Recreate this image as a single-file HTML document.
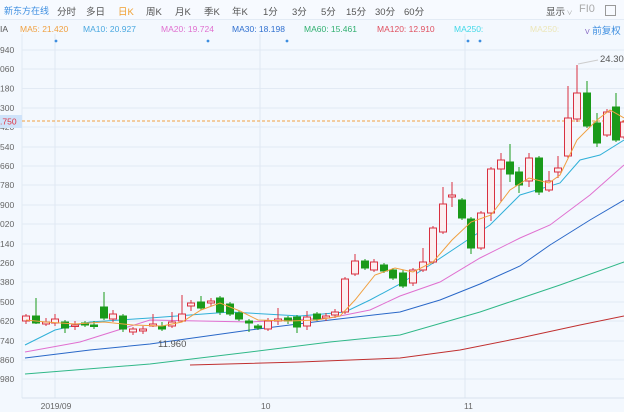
<!DOCTYPE html>
<html><head><meta charset="utf-8"><style>
body{margin:0;width:624px;height:412px;overflow:hidden;background:#f3f8fe;font-family:"Liberation Sans","Noto Sans CJK SC",sans-serif}
.t{position:absolute;font-size:9.5px;white-space:nowrap;color:#555}
.m{position:absolute;font-size:8.5px;white-space:nowrap;top:24px}
</style></head><body>
<div style="position:absolute;left:0;top:0;width:624px;height:19px;background:#f7faff;border-bottom:1px solid #e3ebf5"></div>
<div class="t" style="left:4px;top:4px;color:#3d8ee0;font-size:9px">新东方在线</div>
<div class="t" style="left:57px;top:4px">分时</div>
<div class="t" style="left:86px;top:4px">多日</div>
<div class="t" style="left:118px;top:4px;color:#f0a030">日K</div>
<div class="t" style="left:146px;top:4px">周K</div>
<div class="t" style="left:175px;top:4px">月K</div>
<div class="t" style="left:204px;top:4px">季K</div>
<div class="t" style="left:232px;top:4px">年K</div>
<div class="t" style="left:263px;top:4px">1分</div>
<div class="t" style="left:292px;top:4px">3分</div>
<div class="t" style="left:321px;top:4px">5分</div>
<div class="t" style="left:346px;top:4px">15分</div>
<div class="t" style="left:375px;top:4px">30分</div>
<div class="t" style="left:404px;top:4px">60分</div>
<div class="t" style="left:546px;top:4px">显示<span style="font-size:6px;color:#999"> ∨</span></div>
<div class="t" style="left:579px;top:3px;color:#aaa;font-size:11px">FI0</div>
<div style="position:absolute;left:605px;top:5px;width:9px;height:9px;border:1px solid #999"></div>
<div class="m" style="left:0;color:#555">IA</div>
<div class="m" style="left:20px;color:#f0a040">MA5: 21.420</div>
<div class="m" style="left:83px;color:#4aa8e0">MA10: 20.927</div>
<div class="m" style="left:161px;color:#e070d0">MA20: 19.724</div>
<div class="m" style="left:232px;color:#3070d0">MA30: 18.198</div>
<div class="m" style="left:304px;color:#30b070">MA60: 15.461</div>
<div class="m" style="left:377px;color:#e05060">MA120: 12.910</div>
<div class="m" style="left:454px;color:#40d8e8">MA250:</div>
<div class="m" style="left:530px;color:#ece6b8">MA250:</div>
<div class="m" style="left:585px;top:23px;font-size:9.5px;color:#3d8ee0"><span style="color:#8060c0;font-size:7px">V</span> 前复权</div>
<svg width="624" height="412" style="position:absolute;left:0;top:0" id="s" font-family="Liberation Sans" font-size="9">
</svg>
<script>
var s=document.getElementById('s'),h='';
var ys=[50,69,88.5,108,127,147,166,185,205,224,244,263,282,302,321,341,360,379];
var lb=['940','060','180','300','420','540','660','780','900','020','140','260','380','500','620','740','860','980'];
ys.forEach(function(y,i){h+='<line x1="22" x2="624" y1="'+y+'" y2="'+y+'" stroke="#e2eaf4"/>';h+='<text x="0" y="'+(y+3)+'" fill="#666" font-size="8.5">'+lb[i]+'</text>';});
[55,260,465].forEach(function(x){h+='<line x1="'+x+'" x2="'+x+'" y1="34" y2="398" stroke="#dfe8f2"/>';});
h+='<line x1="22" x2="22" y1="34" y2="398" stroke="#e2eaf4"/><line x1="22" x2="624" y1="398" y2="398" stroke="#d8e2ee"/>';
h+='<text x="56" y="409" fill="#666" text-anchor="middle" font-size="8.5">2019/09</text><text x="261" y="409" fill="#666" font-size="8.5">10</text><text x="464" y="409" fill="#666" font-size="8.5">11</text>';
[56,208,287,468,480].forEach(function(x){h+='<circle cx="'+x+'" cy="41" r="1.4" fill="#3d8ee0"/>';});
h+='<rect x="0" y="115" width="22" height="13" fill="#cfe3fa"/><text x="0" y="124.5" fill="#e03040" font-size="8.5">.750</text>';
h+='<line x1="22" x2="624" y1="121" y2="121" stroke="#f0a040" stroke-dasharray="3,2"/>';
function pl(c,pts){h+='<polyline fill="none" stroke="'+c+'" stroke-width="1" points="'+pts+'"/>';}
pl('#c03030','190,365 300,362 400,358 460,350 520,338 580,325 624,316');
pl('#30b888','25,374 150,364 250,352 330,342 400,335 480,312 560,285 624,262');
pl('#2a68c8','25,358 90,350 150,344 250,330 330,320 400,312 440,300 480,284 520,266 550,245 590,220 624,200');
pl('#e070d0','25,352 80,342 150,320 250,322 330,318 370,310 400,296 440,282 480,258 520,238 550,225 590,195 624,165');
pl('#30b0d8','25,345 55,330 90,322 150,318 230,312 300,316 345,312 370,300 400,284 430,265 460,245 490,225 520,195 560,183 580,160 600,155 624,140');
var c=[[26,'r',316,321,314,324],[36,'g',316,323,298,324],[46,'r',322,324,318,326],[55,'r',319,323,314,326],[65,'g',322,328,320,333],[75,'r',325,326,321,330],[85,'g',323,325,321,327],[94,'g',325,326,321,329],[104,'g',307,318,292,320],[113,'r',314,319,310,322],[123,'g',316,329,314,332],[133,'r',329,332,327,335],[143,'r',329,331,326,334],[153,'r',324,326,314,327],[162,'g',326,329,322,331],[172,'r',322,326,312,328],[182,'r',314,321,295,322],[191,'r',303,306,300,311],[201,'g',302,308,296,310],[211,'r',301,303,298,306],[220,'g',298,312,296,315],[230,'g',304,314,302,316],[239,'g',313,319,311,321],[249,'g',321,323,319,332],[258,'g',326,328,324,330],[268,'r',321,329,318,331],[278,'r',319,321,308,325],[288,'g',318,321,316,324],[297,'g',317,327,315,333],[307,'r',317,326,311,330],[317,'g',314,319,312,321],[326,'r',316,318,313,321],[335,'r',312,315,309,318],[345,'r',279,312,277,314],[355,'r',261,274,254,276],[365,'g',261,268,259,270],[374,'r',262,270,259,272],[384,'g',265,271,263,273],[393,'g',270,278,268,280],[403,'g',273,286,270,288],[413,'r',270,283,268,286],[423,'r',262,270,248,272],[433,'r',228,262,226,264],[443,'r',204,232,187,234],[452,'r',195,197,182,207],[462,'g',200,218,198,220],[471,'g',219,248,217,254],[481,'r',213,248,211,250],[491,'r',169,213,167,221],[501,'r',160,169,153,202],[510,'g',162,174,144,182],[519,'g',172,185,167,193],[529,'r',158,181,153,187],[539,'g',158,192,156,195],[549,'r',181,190,171,192],[558,'r',168,172,156,178],[568,'r',118,156,86,158],[577,'r',93,119,65,122],[587,'g',93,126,81,128],[597,'g',123,143,113,147],[607,'r',112,135,109,137],[616,'g',107,140,93,142],[624,'r',122,137,120,139]];
c.forEach(function(k){var x=k[0],r=k[1]=='r',col=r?'#d83040':'#1a9a1a';
h+='<line x1="'+x+'" x2="'+x+'" y1="'+k[4]+'" y2="'+k[5]+'" stroke="'+col+'"/>';
var hh=Math.max(k[3]-k[2],1.5);
h+='<rect x="'+(x-3.5)+'" y="'+k[2]+'" width="7" height="'+hh+'" fill="'+(r?'#fbeef0':'#1a9a1a')+'" stroke="'+col+'"/>';});
pl('#f0a040','26,320 46,322 75,324 104,322 133,325 162,326 182,322 201,310 220,303 240,311 258,320 290,321 317,320 340,316 355,300 375,275 395,268 413,272 433,262 452,240 471,222 491,215 510,190 529,178 549,183 560,175 577,140 597,120 610,110 624,118');
h+='<text x="158" y="347" fill="#555" font-size="9.5">11.960</text>';
h+='<line x1="578" y1="64" x2="598" y2="60" stroke="#ccc"/><text x="600" y="62" fill="#555" font-size="9.5">24.30</text>';
s.innerHTML=h;
</script>
</body></html>
